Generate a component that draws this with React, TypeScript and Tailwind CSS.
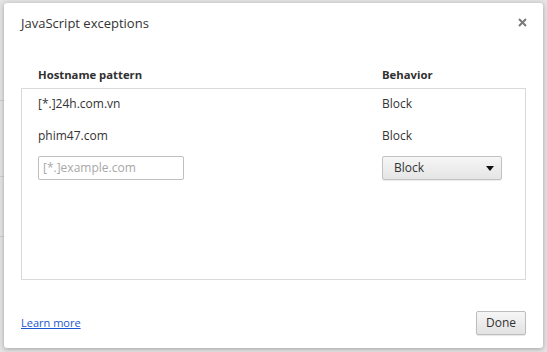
import React from "react";

export default function App() {
  const font = { fontFamily: '"Open Sans", "Noto Sans", sans-serif' };
  return (
    <div className="w-[547px] h-[352px] bg-[#e4e4e4] relative overflow-hidden" style={font}>
      {/* faint background page bits */}
      <div className="absolute left-0 top-[100px] w-[4px] h-px bg-[#cfcfcf]" />
      <div className="absolute left-0 top-[176px] w-[4px] h-px bg-[#cfcfcf]" />
      <div className="absolute left-0 top-[236px] w-[4px] h-px bg-[#cfcfcf]" />
      <div className="absolute left-[4px] top-[3px] w-[539px] h-[345px] bg-white rounded-[3px] shadow-[0_1px_5px_rgba(0,0,0,0.3)] flex flex-col px-[17px]">
        <div className="flex items-start justify-between h-[36px] pt-[10px]">
          <div className="text-[13px] text-[#333] leading-[20px]">JavaScript exceptions</div>
          <svg width="9" height="9" viewBox="0 0 9 9" className="mt-[5px] mr-[-1px]">
            <path d="M1 1 L8 8 M8 1 L1 8" stroke="#7a7a7a" strokeWidth="2" />
          </svg>
        </div>
        <div className="flex h-[16px] mt-[28px] text-[11.3px] font-bold text-[#303030] leading-[16px]">
          <div className="pl-[17px] w-[361px]">Hostname pattern</div>
          <div>Behavior</div>
        </div>
        <div className="mt-[5px] h-[192px] border border-[#d9d9d9] flex flex-col text-[12px] text-[#333]">
          <div className="flex items-center h-[20px] mt-[5px]">
            <div className="pl-[16px] w-[360px]">[*.]24h.com.vn</div>
            <div>Block</div>
          </div>
          <div className="flex items-center h-[20px] mt-[12px]">
            <div className="pl-[16px] w-[360px]">phim47.com</div>
            <div>Block</div>
          </div>
          <div className="flex items-center h-[24px] mt-[10px]">
            <div className="pl-[16px] w-[360px]">
              <div className="w-[146px] h-[24px] border border-[#bfbfbf] rounded-[2px] flex items-center px-[4px] text-[#a8a8a8]">
                [*.]example.com
              </div>
            </div>
            <div className="w-[120px] h-[24px] border border-[#c2c2c2] rounded-[2px] bg-gradient-to-b from-[#f6f6f6] to-[#e5e5e5] shadow-[0_1px_1px_rgba(0,0,0,0.08)] flex items-center justify-between pl-[11px] pr-[7px] text-[#333]">
              <span>Block</span>
              <svg width="8" height="5" viewBox="0 0 8 5">
                <path d="M0 0 L8 0 L4 5 Z" fill="#111" />
              </svg>
            </div>
          </div>
        </div>
        <div className="flex-1" />
        <div className="flex items-center justify-between h-[24px] mb-[13px]">
          <a className="text-[11px] text-[#1a55d0] underline leading-[16px]">Learn more</a>
          <div className="w-[50px] h-[24px] border border-[#bdbdbd] rounded-[2px] bg-gradient-to-b from-[#f6f6f6] to-[#e2e2e2] shadow-[0_1px_1px_rgba(0,0,0,0.1)] flex items-center justify-center text-[12px] text-[#333]">
            Done
          </div>
        </div>
      </div>
    </div>
  );
}
